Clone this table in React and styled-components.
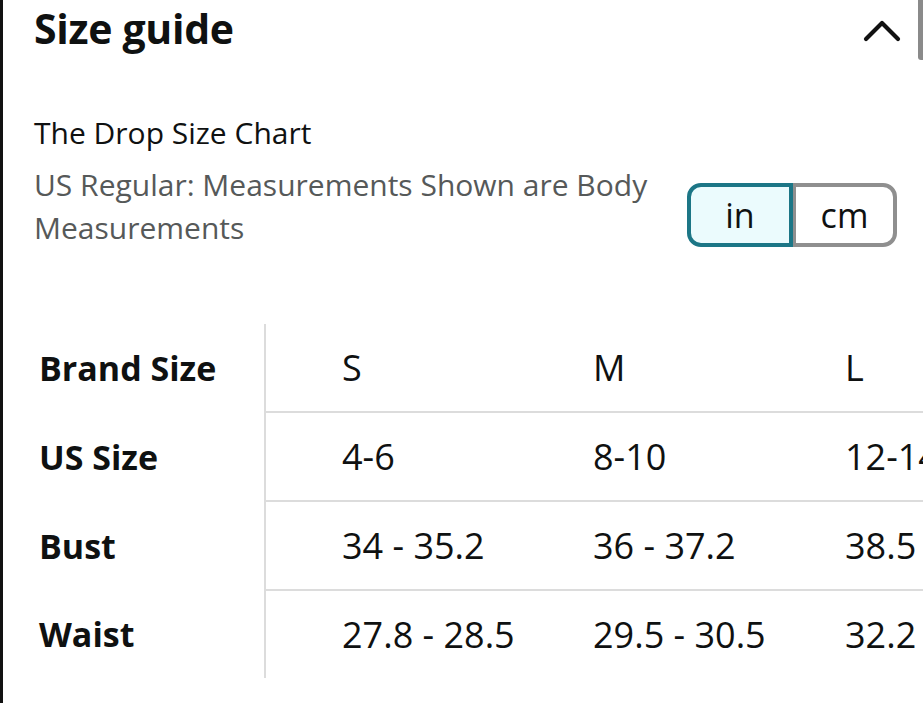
import React from 'react';
import styled, { createGlobalStyle } from 'styled-components';

const GlobalStyle = createGlobalStyle`
  html, body {
    margin: 0;
    padding: 0;
    background: #fff;
  }
  body {
    font-family: "Open Sans", "Noto Sans", sans-serif;
    color: #0f1111;
  }
`;

const Page = styled.div`
  position: relative;
  width: 923px;
  height: 703px;
  box-sizing: border-box;
  border-left: 3px solid #111;
  overflow: hidden;
  background: #fff;
`;

const ScrollThumb = styled.div`
  position: absolute;
  top: 0;
  right: 0;
  width: 5px;
  height: 60px;
  background: #8a8a8a;
  border-radius: 0 0 0 3px;
`;

const Header = styled.div`
  display: flex;
  align-items: center;
  justify-content: space-between;
  padding: 0 22px 0 31px;
  height: 56px;
`;

const Title = styled.h1`
  margin: 0;
  font-size: 41px;
  font-weight: 700;
  letter-spacing: -0.3px;
  line-height: 56px;
`;

const Chevron = styled.svg`
  width: 38px;
  height: 24px;
  margin-top: 6px;
`;

const Intro = styled.div`
  display: flex;
  align-items: flex-start;
  justify-content: space-between;
  padding: 55px 26px 0 31px;
`;

const IntroText = styled.div`
  display: flex;
  flex-direction: column;
  width: 640px;
`;

const ChartName = styled.div`
  font-size: 30px;
  line-height: 43px;
  color: #0f1111;
`;

const ChartNote = styled.div`
  font-size: 30px;
  line-height: 43px;
  color: #565959;
  margin-top: 9px;
`;

const UnitToggle = styled.div`
  display: flex;
  margin-top: 72px;
`;

const UnitButton = styled.div`
  box-sizing: border-box;
  width: ${(p) => p.$w}px;
  height: 64px;
  display: flex;
  align-items: center;
  justify-content: center;
  font-size: 34px;
  color: #0f1111;
  border: 4px solid ${(p) => (p.$active ? '#1c7686' : '#8f8f8f')};
  background: ${(p) => (p.$active ? '#ebfbfd' : '#fff')};
  border-radius: ${(p) => (p.$first ? '14px 0 0 14px' : '0 14px 14px 0')};
  ${(p) => (p.$first ? '' : 'border-left-width: 3px;')}
`;

const Table = styled.table`
  margin-top: 75px;
  width: 1018px;
  border-collapse: collapse;
  table-layout: fixed;
  font-size: 36px;
`;

const LabelCol = styled.col`
  width: 262px;
`;

const ValueCol = styled.col`
  width: 252px;
`;

const LabelCell = styled.th`
  padding: 0 0 0 36px;
  text-align: left;
  font-size: 34px;
  font-weight: 700;
  height: 87px;
  white-space: nowrap;
`;

const ValueCell = styled.td`
  padding: 0 0 0 76px;
  white-space: nowrap;
  overflow: hidden;
  height: 87px;
  border-top: ${(p) => (p.$top ? '2px solid #dcdcdc' : 'none')};
  border-left: ${(p) => (p.$divider ? '2px solid #dcdcdc' : 'none')};
`;

const rows = [
  ['Brand Size', 'S', 'M', 'L'],
  ['US Size', '4-6', '8-10', '12-14'],
  ['Bust', '34 - 35.2', '36 - 37.2', '38.5 - 39.7'],
  ['Waist', '27.8 - 28.5', '29.5 - 30.5', '32.2 - 33.4'],
];

export default function App() {
  return (
    <Page>
      <GlobalStyle />
      <ScrollThumb />
      <Header>
        <Title>Size guide</Title>
        <Chevron viewBox="0 0 38 24" fill="none">
          <polyline
            points="3,20 19,4 35,20"
            stroke="#111"
            strokeWidth="4.2"
            strokeLinecap="round"
            strokeLinejoin="round"
          />
        </Chevron>
      </Header>
      <Intro>
        <IntroText>
          <ChartName>The Drop Size Chart</ChartName>
          <ChartNote>US Regular: Measurements Shown are Body Measurements</ChartNote>
        </IntroText>
        <UnitToggle>
          <UnitButton $active $first $w={106}>in</UnitButton>
          <UnitButton $w={104}>cm</UnitButton>
        </UnitToggle>
      </Intro>
      <Table>
        <colgroup>
          <LabelCol />
          <ValueCol />
          <ValueCol />
          <ValueCol />
        </colgroup>
        <tbody>
          {rows.map((row, i) => (
            <tr key={row[0]}>
              <LabelCell>{row[0]}</LabelCell>
              {row.slice(1).map((v, j) => (
                <ValueCell key={j} $top={i > 0} $divider={j === 0}>
                  {v}
                </ValueCell>
              ))}
            </tr>
          ))}
        </tbody>
      </Table>
    </Page>
  );
}
